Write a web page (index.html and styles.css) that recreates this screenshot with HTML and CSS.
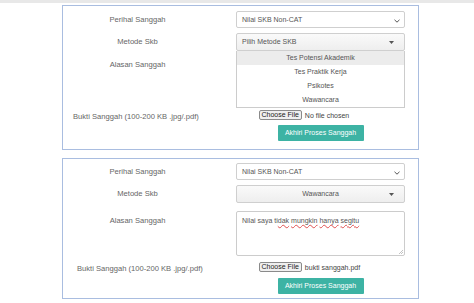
FILE: index.html
```html
<!DOCTYPE html>
<html>
<head>
<meta charset="utf-8">
<link rel="stylesheet" href="styles.css">
</head>
<body>
<div class="topbar"></div>
<div class="page">
  <div class="panel panel-one">
    <div class="row r-sel1">
      <div class="label">Perihal Sanggah</div>
      <div class="select select-white">
        <span class="sel-text">Nilai SKB Non-CAT</span>
        <svg class="chev" width="6" height="4" viewBox="0 0 6 4"><polyline points="0.5,0.8 3,3.2 5.5,0.8" fill="none" stroke="#555" stroke-width="1"/></svg>
      </div>
    </div>
    <div class="row r-sel2">
      <div class="label">Metode Skb</div>
      <div class="select-wrap">
        <div class="select select-gray">
          <span class="sel-text sel-left">Pilih Metode SKB</span>
          <svg class="tri" width="5" height="3" viewBox="0 0 5 3"><polygon points="0,0 5,0 2.5,3" fill="#555"/></svg>
        </div>
        <ul class="dropdown">
          <li class="active">Tes Potensi Akademik</li>
          <li>Tes Praktik Kerja</li>
          <li>Psikotes</li>
          <li>Wawancara</li>
        </ul>
      </div>
    </div>
    <div class="row r-text">
      <div class="label label-top">Alasan Sanggah</div>
      <div class="textarea ta-tall"></div>
    </div>
    <div class="row r-file">
      <div class="label label-file">Bukti Sanggah (100-200 KB .jpg/.pdf)</div>
      <div class="file">
        <span class="file-btn">Choose File</span>
        <span class="file-name">No file chosen</span>
      </div>
    </div>
    <div class="row r-btn">
      <div></div>
      <div class="btn-cell"><span class="btn">Akhiri Proses Sanggah</span></div>
    </div>
  </div>

  <div class="panel panel-two">
    <div class="row r-sel1">
      <div class="label">Perihal Sanggah</div>
      <div class="select select-white">
        <span class="sel-text">Nilai SKB Non-CAT</span>
        <svg class="chev" width="6" height="4" viewBox="0 0 6 4"><polyline points="0.5,0.8 3,3.2 5.5,0.8" fill="none" stroke="#555" stroke-width="1"/></svg>
      </div>
    </div>
    <div class="row r-sel2">
      <div class="label">Metode Skb</div>
      <div class="select select-gray">
        <span class="sel-text sel-center">Wawancara</span>
        <svg class="tri" width="5" height="3" viewBox="0 0 5 3"><polygon points="0,0 5,0 2.5,3" fill="#555"/></svg>
      </div>
    </div>
    <div class="row r-text">
      <div class="label label-top">Alasan Sanggah</div>
      <div class="textarea ta-short">
        <span class="ta-text">Nilai saya ti<span class="spell">dak</span> <span class="spell">mungkin</span> <span class="spell">hanya</span> <span class="spell">segitu</span></span>
        <svg class="grip" width="5" height="5" viewBox="0 0 5 5"><line x1="1" y1="5" x2="5" y2="1" stroke="#aaa" stroke-width="0.7"/><line x1="3" y1="5" x2="5" y2="3" stroke="#aaa" stroke-width="0.7"/></svg>
      </div>
    </div>
    <div class="row r-file">
      <div class="label label-file2">Bukti Sanggah (100-200 KB .jpg/.pdf)</div>
      <div class="file">
        <span class="file-btn">Choose File</span>
        <span class="file-name">bukti sanggah.pdf</span>
      </div>
    </div>
    <div class="row r-btn">
      <div></div>
      <div class="btn-cell"><span class="btn">Akhiri Proses Sanggah</span></div>
    </div>
  </div>
</div>
</body>
</html>
```

FILE: styles.css
```css
* { box-sizing: border-box; }
html, body {
  margin: 0;
  padding: 0;
  background: #ffffff;
  font-family: "Liberation Sans", Arial, sans-serif;
  font-size: 7px;
  color: #666;
}
.topbar {
  height: 3px;
  background: #e8e8e8;
}
.page {
  padding-left: 62px;
}
.panel {
  width: 357px;
  border: 1px solid #a9bde0;
  padding: 0 13px 0 0;
}
.panel-one {
  margin-top: 2px;
  padding-top: 5px;
  padding-bottom: 8px;
}
.panel-two {
  margin-top: 8px;
  padding-top: 4px;
  padding-bottom: 4px;
}
.row {
  display: grid;
  grid-template-columns: 149px 169px;
  column-gap: 24px;
  align-items: center;
}
.label {
  text-align: center;
  color: #666;
  font-size: 7.6px;
  line-height: 10px;
  white-space: nowrap;
}
.label-top {
  align-self: start;
  padding-top: 5px;
}
.r-file { align-items: start; }
.label-file {
  text-align: left;
  padding-left: 10px;
  padding-top: 2px;
}
.label-file2 {
  text-align: left;
  padding-left: 14px;
  padding-top: 2px;
}
.r-sel1 .select { height: 17px; }
.r-sel2 { margin-top: 5px; }
.r-sel2 .select { height: 18px; }
.panel-one .r-text { margin-top: 4px; }
.panel-two .r-text { margin-top: 8px; }
.r-file { margin-top: 2px; }
.panel-two .r-file { margin-top: 6px; }
.r-btn { margin-top: 3px; }
.panel-two .r-btn { margin-top: 4px; }

.select {
  position: relative;
  display: flex;
  align-items: center;
  border: 1px solid #cfcfcf;
  border-radius: 2px;
  color: #555;
  padding-left: 5px;
}
.select-white { background: #fff; }
.select-gray { background: linear-gradient(#fafafa, #eeeeee); }
.sel-text { line-height: 10px; }
.sel-center {
  flex: 1;
  text-align: center;
  padding-right: 5px;
}
.chev {
  position: absolute;
  right: 4px;
  top: 7px;
}
.tri {
  position: absolute;
  right: 10px;
  top: 7px;
}
.select-wrap {
  position: relative;
}
.dropdown {
  position: absolute;
  left: 0;
  right: 0;
  top: 18px;
  margin: 0;
  padding: 0;
  list-style: none;
  background: #fff;
  border: 1px solid #cccccc;
  border-top: none;
  z-index: 2;
}
.dropdown li {
  height: 14px;
  line-height: 14px;
  text-align: center;
  color: #555;
}
.dropdown li.active {
  background: #ececec;
}
.textarea {
  position: relative;
  border: 1px solid #cccccc;
  border-radius: 2px;
  background: #fff;
  padding: 4px 5px;
  color: #555;
}
.ta-tall { height: 53px; }
.ta-short { height: 45px; }
.ta-text { line-height: 10px; }
.spell {
  text-decoration: underline wavy #e05050;
  text-decoration-thickness: 0.7px;
}
.grip {
  position: absolute;
  right: 1px;
  bottom: 1px;
}
.file {
  display: flex;
  align-items: center;
  gap: 3px;
  width: 124px;
  justify-self: center;
  height: 10px;
}
.file-btn {
  height: 10px;
  line-height: 8px;
  padding: 0 2px;
  background: #efefef;
  border: 1px solid #8a8a8a;
  border-radius: 2px;
  color: #222;
  white-space: nowrap;
}
.file-name {
  color: #444;
  white-space: nowrap;
}
.btn-cell {
  display: flex;
  justify-content: center;
}
.btn {
  display: inline-block;
  width: 86px;
  height: 16px;
  line-height: 16px;
  text-align: center;
  background: #3db3a4;
  color: #fff;
  border-radius: 1px;
  white-space: nowrap;
}
```
